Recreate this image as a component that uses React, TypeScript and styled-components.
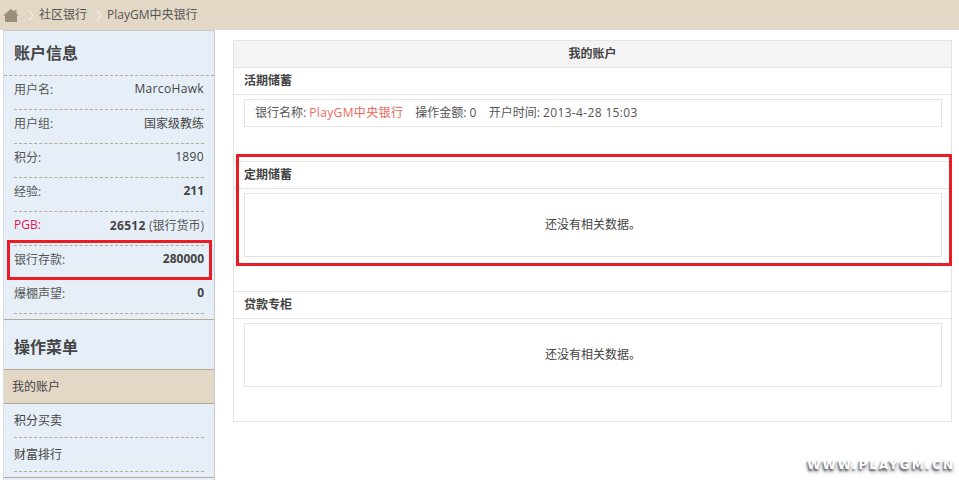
import React from "react"
import styled, { createGlobalStyle } from "styled-components"

const GlobalStyle = createGlobalStyle`
  html, body {
    margin: 0;
    height: 100%;
    overflow: hidden;
    background: #fff;
  }
  #root {
    height: 100%;
  }
  body {
    font-family: "Open Sans", "Noto Sans CJK SC", sans-serif;
    font-size: 12px;
    color: #444;
  }
`

const Page = styled.div`
  position: relative;
  display: flex;
  flex-direction: column;
  height: 100%;
`

const TopBar = styled.div`
  flex: none;
  display: flex;
  align-items: center;
  height: 30px;
  padding-left: 3px;
  background: #e3d8c5;
  color: #555;
`

const Crumb = styled.span`
  line-height: 28px;
`

const CrumbArrow = styled.svg`
  width: 6px;
  height: 11px;
  margin: 0 5px 0 9px;
`

const Body = styled.div`
  flex: 1;
  display: flex;
  min-height: 0;
`

const Sidebar = styled.aside`
  flex: none;
  box-sizing: border-box;
  width: 212px;
  margin-left: 3px;
  background: #e6eff7;
  border: 1px solid #c9c9c9;
  border-left: 1px solid #d5dde2;
  border-bottom: 0;
`

const SideTitle = styled.h2`
  margin: 0;
  box-sizing: border-box;
  height: 45px;
  padding: 12px 0 0 10px;
  font-size: 16px;
  font-weight: 700;
  line-height: 20px;
  color: #444;
  border-bottom: 1px dashed #b5a898;
`

const MenuTitle = styled(SideTitle)`
  height: 49px;
  padding-top: 17px;
  border-bottom: 0;
`

const InfoGroup = styled.div`
  padding-bottom: 5px;
  border-bottom: 1px solid #b5a898;
`

const InfoRow = styled.div`
  display: flex;
  align-items: center;
  justify-content: space-between;
  box-sizing: border-box;
  height: 34px;
  margin: 0 10px;
  padding-bottom: 8px;
  border-bottom: 1px dashed #b5a898;
`

const InfoLabel = styled.span<{ $accent?: boolean }>`
  color: ${(p) => (p.$accent ? "#e8174f" : "#555")};
`

const InfoValue = styled.span<{ $bold?: boolean }>`
  color: #444;
  font-weight: ${(p) => (p.$bold ? 700 : 400)};
`

const InfoNote = styled.span`
  font-weight: 400;
  color: #555;
`

const Latin = styled.span`
  letter-spacing: 0.35px;
`

const ActiveItem = styled.div`
  box-sizing: border-box;
  height: 35px;
  padding-left: 8px;
  line-height: 33px;
  color: #444;
  background: #e3d8c5;
  border-top: 1px solid #b5a898;
  border-bottom: 1px solid #b5a898;
`

const MenuItem = styled.div`
  box-sizing: border-box;
  height: 34px;
  margin: 0 10px;
  line-height: 33px;
  color: #444;
  border-bottom: 1px dashed #b5a898;
`

const MenuEnd = styled.div`
  margin-top: 5px;
  border-top: 1px solid #b5a898;
`

const Main = styled.main`
  flex: 1;
  min-width: 0;
  padding: 10px 7px 0 18px;
`

const Panel = styled.div`
  border: 1px solid #e5e5e0;
`

const PanelHeader = styled.div`
  height: 26px;
  line-height: 26px;
  text-align: center;
  font-weight: 700;
  color: #444;
  background: #f4f4f4;
`

const Section = styled.section`
  border-top: 1px solid #e5e5e0;
`

const SectionTitle = styled.h3`
  margin: 0;
  height: 26px;
  padding-left: 10px;
  line-height: 26px;
  font-size: 12px;
  font-weight: 700;
  color: #444;
  border-bottom: 1px solid #e5e5e0;
`

const SectionBody = styled.div`
  padding: 4px 9px 34px 10px;
`

const RecordBox = styled.div`
  display: flex;
  gap: 12px;
  box-sizing: border-box;
  height: 28px;
  padding-left: 10px;
  line-height: 26px;
  color: #555;
  border: 1px solid #e5e5e0;
`

const BankLink = styled(Latin)`
  color: #e9685c;
`

const EmptyBox = styled.div`
  display: flex;
  align-items: center;
  justify-content: center;
  box-sizing: border-box;
  height: 64px;
  padding-bottom: 2px;
  color: #444;
  border: 1px solid #e5e5e0;
`

const Callout = styled.div<{ $l: number; $t: number; $w: number; $h: number }>`
  position: absolute;
  box-sizing: border-box;
  left: ${(p) => p.$l}px;
  top: ${(p) => p.$t}px;
  width: ${(p) => p.$w}px;
  height: ${(p) => p.$h}px;
  border: 3px solid #ed1c24;
  pointer-events: none;
`

const Watermark = styled.div`
  position: absolute;
  right: 4px;
  bottom: 8px;
  font-family: "DejaVu Sans", sans-serif;
  font-size: 12px;
  font-weight: 700;
  letter-spacing: 2px;
  color: #fff;
  text-shadow: -1px 2px 2px #666, 0 3px 4px #999;
`

const HomeIcon = () => (
  <svg width="16" height="13" viewBox="0 0 16 13">
    <path d="M8 0 L16 6.6 L14 6.6 L14 13 L2 13 L2 6.6 L0 6.6 Z" fill="#9c8d7a" />
    <rect x="11.5" y="1" width="2" height="3.5" fill="#9c8d7a" />
  </svg>
)

const Arrow = () => (
  <CrumbArrow viewBox="0 0 6 11">
    <path d="M1 0.5 L5 5.5 L1 10.5" fill="none" stroke="#f6f1e8" strokeWidth="1.2" />
  </CrumbArrow>
)

const infoRows = [
  { label: "用户名:", value: <Latin>MarcoHawk</Latin> },
  { label: "用户组:", value: "国家级教练" },
  { label: "积分:", value: <Latin>1890</Latin> },
  { label: "经验:", value: "211", bold: true },
  { label: "PGB:", value: <Latin>26512</Latin>, bold: true, accent: true, note: " (银行货币)" },
  { label: "银行存款:", value: "280000", bold: true },
  { label: "爆棚声望:", value: "0", bold: true },
]

const App = () => {
  return (
    <Page>
      <GlobalStyle />
      <TopBar>
        <HomeIcon />
        <Arrow />
        <Crumb>社区银行</Crumb>
        <Arrow />
        <Crumb>PlayGM中央银行</Crumb>
      </TopBar>
      <Body>
        <Sidebar>
          <SideTitle>账户信息</SideTitle>
          <InfoGroup>
            {infoRows.map((row) => (
              <InfoRow key={row.label}>
                <InfoLabel $accent={row.accent}>{row.label}</InfoLabel>
                <InfoValue $bold={row.bold}>
                  {row.value}
                  {row.note && <InfoNote>{row.note}</InfoNote>}
                </InfoValue>
              </InfoRow>
            ))}
          </InfoGroup>
          <MenuTitle>操作菜单</MenuTitle>
          <ActiveItem>我的账户</ActiveItem>
          <MenuItem>积分买卖</MenuItem>
          <MenuItem>财富排行</MenuItem>
          <MenuEnd />
        </Sidebar>
        <Main>
          <Panel>
            <PanelHeader>我的账户</PanelHeader>
            <Section>
              <SectionTitle>活期储蓄</SectionTitle>
              <SectionBody>
                <RecordBox>
                  <span>
                    银行名称: <BankLink>PlayGM中央银行</BankLink>
                  </span>
                  <span>
                    操作金额: <Latin>0</Latin>
                  </span>
                  <span>
                    开户时间: <Latin>2013-4-28 15:03</Latin>
                  </span>
                </RecordBox>
              </SectionBody>
            </Section>
            <Section>
              <SectionTitle>定期储蓄</SectionTitle>
              <SectionBody>
                <EmptyBox>还没有相关数据。</EmptyBox>
              </SectionBody>
            </Section>
            <Section>
              <SectionTitle>贷款专柜</SectionTitle>
              <SectionBody>
                <EmptyBox>还没有相关数据。</EmptyBox>
              </SectionBody>
            </Section>
          </Panel>
        </Main>
      </Body>
      <Callout $l={7} $t={240} $w={205} $h={40} />
      <Callout $l={236} $t={154} $w={716} $h={112} />
      <Watermark>WWW.PLAYGM.CN</Watermark>
    </Page>
  )
}

export default App
